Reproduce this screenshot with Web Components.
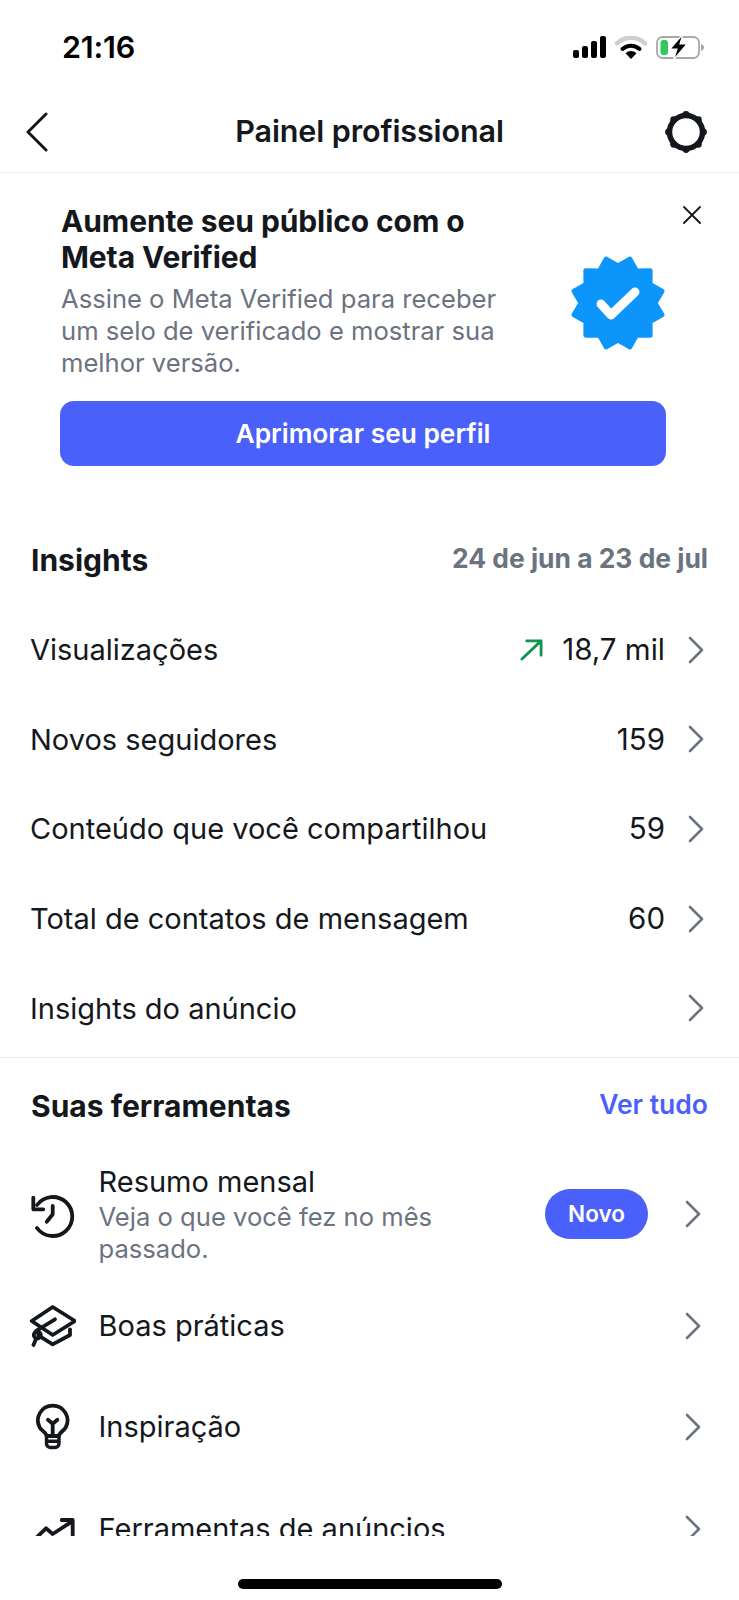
<!doctype html>
<html lang="pt-BR">
<head>
<meta charset="utf-8">
<title>Painel profissional</title>
<style>
  html, body { margin: 0; height: 100%; background: #fff; }
  body { font-family: Inter, "Liberation Sans", sans-serif; color: #14181d; }
</style>
</head>
<body>
<pro-panel>
  <status-bar></status-bar>
  <nav-bar>Painel profissional</nav-bar>
  <meta-banner></meta-banner>
  <insights-head></insights-head>
  <insight-row label="Visualizações" value="18,7 mil" trend></insight-row>
  <insight-row label="Novos seguidores" value="159"></insight-row>
  <insight-row label="Conteúdo que você compartilhou" value="59"></insight-row>
  <insight-row label="Total de contatos de mensagem" value="60"></insight-row>
  <insight-row label="Insights do anúncio"></insight-row>
  <tools-head></tools-head>
  <tool-row icon="history" label="Resumo mensal" sub="Veja o que você fez no mês passado." badge="Novo" height="110" style="margin-bottom: 7px"></tool-row>
  <tool-row icon="cap" label="Boas práticas" height="100"></tool-row>
  <tool-row icon="bulb" label="Inspiração" height="102"></tool-row>
  <tool-row icon="trend" label="Ferramentas de anúncios" height="102"></tool-row>
</pro-panel>

<script>
const CHEVRON = `<svg width="18" height="28" viewBox="0 0 18 28" fill="none"><path d="M3 2l12 12L3 26" stroke="#6b7280" stroke-width="2.6" stroke-linecap="round" stroke-linejoin="round"/></svg>`;

const ICONS = {
  history: `<path d="M9 15A19.500 19.500 0 1 1 9 38"/><path d="M5.300 7.700v11.600h10"/><path d="M24.700 16v8.300l-6 7.400"/>`,
  cap: `<path d="M24.700 5 3.700 19l21 14L47 19z"/><path d="M10.300 27.300v6L24.700 42.300 42 33v-5.700"/><path d="M27 17.300 8 29"/><circle cx="9.300" cy="33" r="3.500"/><path d="M7.500 38l-2 5"/>`,
  bulb: `<path d="M18.500 33c0-3-5-5.500-6.800-8.500a14.800 14.800 0 1 1 26 0C36 27.500 31 30 31 33z"/><path d="M24.700 33V20M20 16.700l4.700 4 4.700-4"/><path d="M18.500 33v7.500a4 4 0 0 0 4 4H27a4 4 0 0 0 4-4V33M18.500 38.300H31" stroke-width="3.400"/>`,
  trend: `<path d="M4 37l14-13.700 6.700 5.700 19-12.300"/><path d="M33.700 15h11v15"/>`
};

// 12 pointed seal, rounded off by the stroke join
function sealPoints(cx, cy, outer, inner) {
  const pts = [];
  for (let i = 0; i < 24; i++) {
    const r = i % 2 ? outer : inner;
    const a = (i * 15 - 90) * Math.PI / 180;
    pts.push((cx + r * Math.cos(a)).toFixed(2) + ',' + (cy + r * Math.sin(a)).toFixed(2));
  }
  return pts.join(' ');
}

// ring with eight little bumps for the settings gear
function gearBumps(cx, cy, r, size) {
  let out = '';
  for (let i = 0; i < 8; i++) {
    const a = (i * 45 - 90) * Math.PI / 180;
    out += `<circle cx="${(cx + r * Math.cos(a)).toFixed(2)}" cy="${(cy + r * Math.sin(a)).toFixed(2)}" r="${size}"/>`;
  }
  return out;
}

class ProPanel extends HTMLElement {
  constructor() {
    super();
    this.attachShadow({ mode: 'open' }).innerHTML = `
      <style>
        :host { display: flex; flex-direction: column; width: 739px; height: 1600px; position: relative; overflow: hidden; }
        .clip { height: 1536px; overflow: hidden; flex: none; }
        .home { margin: 43px auto 0; width: 264px; height: 10px; border-radius: 5px; background: #000; flex: none; }
      </style>
      <div class="clip"><slot></slot></div>
      <div class="home"></div>`;
  }
}

class StatusBar extends HTMLElement {
  constructor() {
    super();
    this.attachShadow({ mode: 'open' }).innerHTML = `
      <style>
        :host { display: flex; align-items: center; justify-content: space-between; height: 94px; padding: 0 35px 0 62px; box-sizing: border-box; }
        .time { font: 600 30.500px/1 Inter, sans-serif; color: #000; letter-spacing: -.2px; }
        .icons { display: flex; align-items: center; gap: 9px; }
        svg { display: block; }
      </style>
      <span class="time">21:16</span>
      <div class="icons">
        <svg width="33" height="22" viewBox="0 0 33 22" fill="#000"><rect x="0" y="14" width="6" height="8" rx="2"/><rect x="9" y="10" width="6" height="12" rx="2"/><rect x="18" y="5" width="6" height="17" rx="2"/><rect x="27" y="0" width="6" height="22" rx="2"/></svg>
        <svg width="32" height="23" viewBox="0 0 32 23"><path d="M2 7.500a20 20 0 0 1 28 0" fill="none" stroke="#cfcfcf" stroke-width="4.500" stroke-linecap="round"/><path d="M7.500 13a12.500 12.500 0 0 1 17 0" fill="none" stroke="#000" stroke-width="4" stroke-linecap="round"/><path d="M10.500 17.300a8 8 0 0 1 11 0L16 23z" fill="#000"/></svg>
        <svg width="48" height="26" viewBox="0 0 48 26"><rect x="1" y="3" width="42" height="21" rx="5.500" fill="none" stroke="#a8a8a8" stroke-width="1.800"/><path d="M45 10c2 .5 3 2 3 3.500S47 16.500 45 17z" fill="#a8a8a8"/><rect x="4.500" y="6" width="7.500" height="15" rx="3" fill="#34c759"/><path d="M27 0 14 15h7l-3.500 11L31 10h-7z" fill="#000" stroke="#fff" stroke-width="1.200"/></svg>
      </div>`;
  }
}

class NavBar extends HTMLElement {
  constructor() {
    super();
    this.attachShadow({ mode: 'open' }).innerHTML = `
      <style>
        :host { display: grid; grid-template-columns: 1fr auto 1fr; align-items: center; height: 79px; padding: 0 31px 3px 31px; box-sizing: border-box; border-bottom: 1px solid #f0f0f1; }
        .title { font: 600 30.500px/1 Inter, sans-serif; color: #14181d; letter-spacing: -.1px; }
        .back { margin-left: -6px; }
        .gear { justify-self: end; }
        svg { display: block; }
      </style>
      <svg class="back" width="24" height="40" viewBox="0 0 24 40" fill="none"><path d="M21 2 3 20l18 18" stroke="#14181d" stroke-width="3" stroke-linecap="round" stroke-linejoin="round"/></svg>
      <span class="title"><slot></slot></span>
      <svg class="gear" width="44" height="44" viewBox="0 0 44 44" fill="#14181d"><circle cx="22" cy="22" r="16.500" fill="none" stroke="#14181d" stroke-width="5.500"/>${gearBumps(22, 22, 17.5, 3.4)}</svg>`;
  }
}

class MetaBanner extends HTMLElement {
  constructor() {
    super();
    this.attachShadow({ mode: 'open' }).innerHTML = `
      <style>
        :host { display: block; position: relative; padding: 30px 73px 0 61px; height: 322px; box-sizing: border-box; }
        .top { display: flex; justify-content: space-between; align-items: flex-start; }
        h2 { margin: 0; font: 700 30px/36px Inter, sans-serif; color: #14181d; letter-spacing: -.1px; }
        p { margin: 8px 0 0; font: 400 25.600px/32px Inter, sans-serif; color: #6b7280; }
        .copy { width: 445px; }
        .seal { margin-top: 52px; flex: none; }
        button { display: block; width: 606px; height: 65px; margin: 22px 0 0 -1px; padding: 2px 0 0; border: 0; border-radius: 14px; background: #4a60fb; color: #fff; font: 600 26.300px/1 Inter, sans-serif; }
        .close { position: absolute; top: 33px; right: 38px; }
        svg { display: block; }
      </style>
      <div class="top">
        <div class="copy">
          <h2>Aumente seu público com o Meta Verified</h2>
          <p>Assine o Meta Verified para receber um selo de verificado e mostrar sua melhor versão.</p>
        </div>
        <svg class="seal" width="96" height="96" viewBox="0 0 96 96"><polygon points="${sealPoints(48, 48, 45.5, 37)}" fill="#0c95fb" stroke="#0c95fb" stroke-width="5" stroke-linejoin="round"/><path d="M31 49l10 11 24-23" fill="none" stroke="#fff" stroke-width="9" stroke-linecap="round" stroke-linejoin="round"/></svg>
      </div>
      <button>Aprimorar seu perfil</button>
      <svg class="close" width="18" height="18" viewBox="0 0 18 18"><path d="M1 1l16 16M17 1 1 17" stroke="#14181d" stroke-width="1.800" stroke-linecap="round"/></svg>`;
  }
}

class InsightsHead extends HTMLElement {
  constructor() {
    super();
    this.attachShadow({ mode: 'open' }).innerHTML = `
      <style>
        :host { display: flex; align-items: center; justify-content: space-between; padding: 0 31px; height: 60px; margin: 35px 0 15px; }
        b { font: 700 30px/1 Inter, sans-serif; color: #14181d; }
        span { font: 700 26.400px/1 Inter, sans-serif; color: #6b7280; margin-top: -4px; }
      </style>
      <b>Insights</b><span>24 de jun a 23 de jul</span>`;
  }
}

class InsightRow extends HTMLElement {
  connectedCallback() {
    if (this.shadowRoot) return;
    const value = this.getAttribute('value');
    const trend = this.hasAttribute('trend');
    this.attachShadow({ mode: 'open' }).innerHTML = `
      <style>
        :host { display: flex; align-items: center; height: 89.600px; padding: 0 31px 0 30px; box-sizing: border-box; }
        .label { flex: 1; font: 400 29px/1 Inter, sans-serif; color: #14181d; }
        .value { font: 400 29.500px/1 Inter, sans-serif; color: #14181d; margin-right: 22px; }
        .arrow { margin-right: 19px; display: block; }
        svg { display: block; flex: none; }
        .chev { margin-right: 3px; }
      </style>
      <span class="label">${this.getAttribute('label')}</span>
      ${trend ? `<svg class="arrow" width="23" height="23" viewBox="0 0 24 24" fill="none"><path d="M2 22 22 3M7 3h15v15" stroke="#12924f" stroke-width="2.900" stroke-linecap="round" stroke-linejoin="round"/></svg>` : ''}
      ${value ? `<span class="value">${value}</span>` : ''}
      <span class="chev">${CHEVRON}</span>`;
  }
}

class ToolsHead extends HTMLElement {
  constructor() {
    super();
    this.attachShadow({ mode: 'open' }).innerHTML = `
      <style>
        :host { display: flex; align-items: center; justify-content: space-between; padding: 0 31px 4px; height: 102px; margin-top: 4px; border-top: 1px solid #ececee; box-sizing: border-box; }
        b { font: 700 30px/1 Inter, sans-serif; color: #14181d; }
        a { font: 600 26.500px/1 Inter, sans-serif; color: #4a60fb; margin-top: -4px; }
      </style>
      <b>Suas ferramentas</b><a>Ver tudo</a>`;
  }
}

class ToolRow extends HTMLElement {
  connectedCallback() {
    if (this.shadowRoot) return;
    const sub = this.getAttribute('sub');
    const badge = this.getAttribute('badge');
    this.attachShadow({ mode: 'open' }).innerHTML = `
      <style>
        :host { display: flex; align-items: center; height: ${this.getAttribute('height')}px; padding: 0 31px 0 28px; box-sizing: border-box; }
        .icon { width: 48px; height: 48px; margin-right: 22.500px; flex: none; display: block; }
        .text { flex: 1; min-width: 0; }
        .text.has-sub { padding-top: 2px; }
        .label { font: 400 29px/34px Inter, sans-serif; color: #14181d; }
        .sub { font: 400 25.600px/32px Inter, sans-serif; color: #6b7280; width: 350px; margin-top: 2px; }
        .badge { width: 103px; height: 50px; border-radius: 25px; background: #4a60fb; color: #fff; font: 600 22.500px/50px Inter, sans-serif; text-align: center; margin-right: 36px; flex: none; }
        .chev { margin-right: 6px; }
        svg { display: block; flex: none; }
      </style>
      <svg class="icon" viewBox="0 0 48 48" fill="none" stroke="#14181d" stroke-width="3.800" stroke-linecap="round" stroke-linejoin="round">${ICONS[this.getAttribute('icon')]}</svg>
      <div class="text ${sub ? 'has-sub' : ''}">
        <div class="label">${this.getAttribute('label')}</div>
        ${sub ? `<div class="sub">${sub}</div>` : ''}
      </div>
      ${badge ? `<span class="badge">${badge}</span>` : ''}
      <span class="chev">${CHEVRON}</span>`;
  }
}

customElements.define('pro-panel', ProPanel);
customElements.define('status-bar', StatusBar);
customElements.define('nav-bar', NavBar);
customElements.define('meta-banner', MetaBanner);
customElements.define('insights-head', InsightsHead);
customElements.define('insight-row', InsightRow);
customElements.define('tools-head', ToolsHead);
customElements.define('tool-row', ToolRow);
</script>
</body>
</html>
